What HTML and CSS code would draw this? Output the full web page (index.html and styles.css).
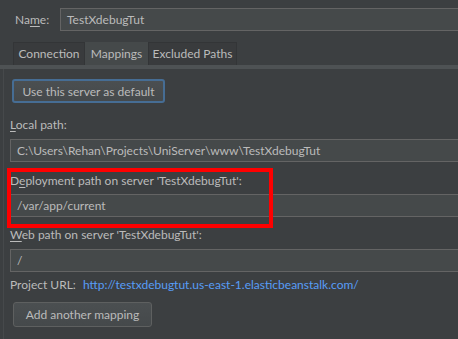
FILE: index.html
```html
<!DOCTYPE html>
<html>
<head>
<meta charset="utf-8">
<link rel="stylesheet" href="styles.css">
</head>
<body>
<div class="name-row">
  <label class="name-label">Na<u>m</u>e:</label>
  <div class="field name-field">TestXdebugTut</div>
</div>
<div class="tabs">
  <div class="tab tab-conn">Connection</div>
  <div class="tab tab-map active">Mappings</div>
  <div class="tab tab-excl">Excluded Paths</div>
</div>
<div class="tab-line"></div>
<div class="panel">
  <button class="btn btn-focus">Use this server as default</button>
  <div class="label label-local"><u>L</u>ocal path:</div>
  <div class="field">C:\Users\Rehan\Projects\UniServer\www\TestXdebugTut</div>
  <div class="label label-deploy">D<u>e</u>ployment path on server 'TestXdebugTut':</div>
  <div class="field field-deploy">/var/app/current</div>
  <div class="label label-web"><u>W</u>eb path on server 'TestXdebugTut':</div>
  <div class="field field-web">/</div>
  <div class="url-row">
    <span class="label-url">Project URL:</span>
    <a class="link">http://testxdebugtut.us-east-1.elasticbeanstalk.com/</a>
  </div>
  <button class="btn btn-add">Add another mapping</button>
  <div class="highlight"></div>
</div>
</body>
</html>
```
FILE: styles.css
```css
html, body {
  margin: 0;
  padding: 0;
  background: #3c3f41;
  height: 100%;
  overflow: hidden;
}
body {
  font-family: "Lato", "Open Sans", sans-serif;
  font-size: 12px;
  color: #bbbbbb;
  padding-top: 8px;
  box-sizing: border-box;
}
u {
  text-decoration: underline;
  text-underline-offset: 2px;
}
.name-row {
  display: flex;
  align-items: center;
  height: 23px;
}
.name-label {
  width: 45px;
  padding-left: 15px;
  flex: none;
}
.field {
  box-sizing: border-box;
  height: 23px;
  line-height: 21px;
  background: #45494a;
  border: 1px solid #646464;
  border-right: none;
  padding-left: 6px;
  white-space: nowrap;
  overflow: hidden;
}
.name-field {
  flex: 1;
}
.tabs {
  display: flex;
  margin-top: 11px;
  padding-left: 13px;
  height: 23px;
}
.tab {
  box-sizing: border-box;
  height: 23px;
  line-height: 22px;
  background: #393b3d;
  border: 1px solid #333537;
  border-bottom: none;
  text-align: center;
  white-space: nowrap;
}
.tab-conn { width: 72px; }
.tab-map { width: 63px; }
.tab-excl { width: 89px; }
.tab.active {
  background: #45494a;
  border-color: #45494a;
}
.tab-line {
  height: 4px;
  background: #4e5254;
}
.panel {
  position: relative;
  margin-left: 3px;
  border-left: 1px solid #46494b;
  padding-left: 6px;
  padding-top: 10px;
  height: 270px;
}
.btn {
  display: block;
  box-sizing: border-box;
  font: inherit;
  color: #bbbbbb;
  background: linear-gradient(#4b4f51, #45494b);
  border: 1px solid #5e6060;
  border-radius: 3px;
  padding: 0;
  white-space: nowrap;
  text-align: center;
}
.btn-focus {
  margin-left: 2px;
  width: 153px;
  height: 24px;
  border: 2px solid #466d94;
}
.label {
  height: 16px;
  line-height: 16px;
}
.label-local { margin-top: 14px; margin-bottom: 6px; }
.label-deploy { margin-top: 11px; margin-bottom: 5px; }
.label-web { margin-top: 10px; margin-bottom: 6px; }
.url-row {
  display: flex;
  height: 16px;
  line-height: 16px;
  margin-top: 5px;
}
.label-url { width: 73px; }
.link { color: #589df6; }
.btn-add {
  margin-top: 9px;
  margin-left: 3px;
  width: 139px;
  height: 25px;
}
.highlight {
  position: absolute;
  left: 3px;
  top: 99px;
  width: 266px;
  height: 60px;
  box-sizing: border-box;
  border: 4px solid #ff0000;
}
```
